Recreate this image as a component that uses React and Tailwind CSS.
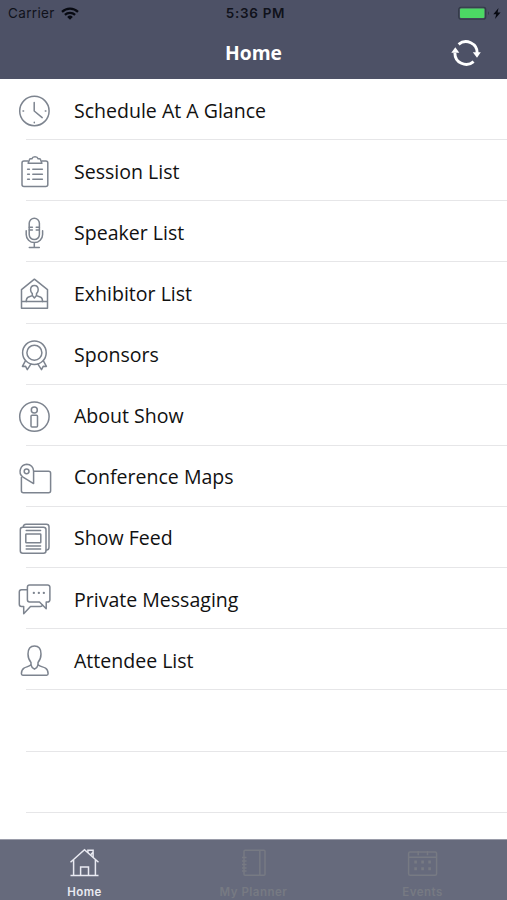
function Icon({ children }) {
  return (
    <svg
      viewBox="0 0 36 36"
      className="w-9 h-9 shrink-0"
      fill="none"
      stroke="#7d848f"
      strokeWidth="1.5"
      strokeLinecap="round"
      strokeLinejoin="round"
    >
      {children}
    </svg>
  );
}

const menuItems = [
  {
    label: 'Schedule At A Glance',
    icon: (
      <Icon>
        <circle cx="17.4" cy="18" r="14.7" />
        <path d="M17.2 9.5V18l8 6.6M6 18h.6M28.3 18h.6M17.3 29.3v.5" />
      </Icon>
    ),
  },
  {
    label: 'Session List',
    icon: (
      <Icon>
        <path d="M10.9 7H7a2 2 0 0 0-2 2v21.5a2 2 0 0 0 2 2h21.800a2 2 0 0 0 2-2V9a2 2 0 0 0-2-2h-3.700" />
        <path d="M11.100 9.300 12.500 5.600c.2-.6.600-.8 1.200-.8h1.200c.4-1.300 1.600-2 3.100-2s2.700.7 3.100 2h1.200c.6 0 1 .2 1.200.8l1.400 3.700z" />
        <path d="M10.600 15.300h1.800M15.800 15.300h9.600M10.600 20.300h1.800M15.800 20.300h9.600M10.600 25.300h1.800M15.800 25.300h9.600" />
      </Icon>
    ),
  },
  {
    label: 'Speaker List',
    icon: (
      <Icon>
        <rect x="12.2" y="3.2" width="10.2" height="21.4" rx="5.1" />
        <path d="M9.2 15.8v3.600a8.200 8.200 0 0 0 16.400 0v-3.600M17.300 27.600v4.800M12.300 32.400h10" />
        <path d="M12.200 12.200h3.200M19.200 12.200h3.200M12.200 15h3.200M19.200 15h3.200" />
      </Icon>
    ),
  },
  {
    label: 'Exhibitor List',
    icon: (
      <Icon>
        <path d="M4.5 32.200V13.600L17.400 3.200l13.100 10.400v18.600zM4.500 25.600h26" />
        <path d="M15.300 17.600c-1.200-1-1.700-2.300-1.700-3.800 0-2.600 1.500-4.400 3.800-4.400s3.800 1.800 3.800 4.400c0 1.500-.5 2.800-1.700 3.800v2l4.300 1.700c1.200.5 1.700 1.600 1.800 4.300M15.300 17.600v2L11 21.300c-1.200.5-1.700 1.600-1.800 4.300M15.300 19.600l2.100 2.400 2.100-2.400" />
      </Icon>
    ),
  },
  {
    label: 'Sponsors',
    icon: (
      <Icon>
        <circle cx="17.4" cy="14.7" r="11.8" />
        <circle cx="17.4" cy="14.7" r="7.5" />
        <path d="m8.400 22.800-3 5.600 3.200-.1 1.700 3.400 3.600-5.500M26.400 22.800l3 5.600-3.200-.1-1.700 3.400-3.600-5.500" />
      </Icon>
    ),
  },
  {
    label: 'About Show',
    icon: (
      <Icon>
        <circle cx="17.4" cy="17.6" r="14.7" />
        <circle cx="17.3" cy="11" r="3" />
        <rect x="14" y="16.2" width="6.5" height="11.8" rx="1" />
      </Icon>
    ),
  },
  {
    label: 'Conference Maps',
    icon: (
      <Icon>
        <path d="M4.400 17.500v13.300a2 2 0 0 0 2 2h25.200a2 2 0 0 0 2-2V13.200a2 2 0 0 0-2-2H16.800" />
        <path d="M16.600 23.600 5.600 16.800A7.100 7.100 0 0 1 9.700 4.300c4 0 6.900 3 6.900 6.900z" />
        <circle cx="9.6" cy="11.3" r="2.4" />
      </Icon>
    ),
  },
  {
    label: 'Show Feed',
    icon: (
      <Icon>
        <rect x="3.3" y="6.3" width="25.7" height="26" rx="2.5" />
        <path d="M6.300 6.100c0-1.800 1-2.900 2.800-2.900h20.300c1.600 0 2.600 1 2.600 2.600v20.500c0 1.800-1 2.800-2.800 2.900" />
        <rect x="8.8" y="13" width="15" height="8.8" rx="0.6" />
        <path d="M9.200 9.600h14.400M9.200 25h14.400M9.200 28h14.400" />
      </Icon>
    ),
  },
  {
    label: 'Private Messaging',
    icon: (
      <Icon>
        <path d="M12.600 3h18.100a2.200 2.200 0 0 1 2.200 2.200v12.600a2.200 2.200 0 0 1-2.200 2.200h-1.500v6.800L22.500 20h-9.900a2.200 2.200 0 0 1-2.200-2.200V5.200A2.200 2.200 0 0 1 12.600 3z" />
        <path d="M10.200 7.800H4.500a2.200 2.200 0 0 0-2.200 2.200v12.300a2.200 2.200 0 0 0 2.200 2.200h2.200v7.200l6.800-7.200h9.800c1.300 0 2-.6 2.300-1.400" />
        <path strokeWidth="2.2" d="M16.800 10.900h.1M21.800 10.900h.1M26.800 10.900h.1" />
      </Icon>
    ),
  },
  {
    label: 'Attendee List',
    icon: (
      <Icon>
        <path d="M14 19.400c-2-2.300-3-5.200-3-8.500 0-4.900 2.400-8 6.500-8s6.500 3.100 6.500 8c0 3.300-1 6.200-3 8.500v2.500c2.500 1.800 5.200 1.900 7.500 3.200 1.900 1.100 2.600 3 2.600 5.700 0 .9-.5 1.400-1.400 1.400H5.800c-.9 0-1.400-.5-1.400-1.400 0-2.700.7-4.600 2.600-5.700 2.300-1.300 4.600-1.400 7-3.200z" />
        <path d="M14 21.900c.3 1.900 1.700 3.300 3.500 4.300 1.800-1 3.200-2.400 3.500-4.300" />
      </Icon>
    ),
  },
];

function StatusBar() {
  return (
    <div className="grid grid-cols-3 items-center h-[27px] pl-2 pr-1 font-[Inter,sans-serif] text-[13.5px] text-[#10121b]">
      <div className="flex items-center gap-1.5 tracking-[0.35px]">
        <span>Carrier</span>
        <svg viewBox="0 0 18 13" className="w-[18px] h-[13px]" fill="none" stroke="#080a12" strokeWidth="2.2">
          <path d="M1 4.9a11.5 11.5 0 0 1 16 0M3.9 7.9a7.300 7.300 0 0 1 10.200 0" />
          <path d="M9 12.700 6.200 9.900a4 4 0 0 1 5.600 0z" fill="#080a12" stroke="none" />
        </svg>
      </div>
      <div className="text-center font-semibold tracking-[0.7px] whitespace-nowrap">5:36 PM</div>
      <div className="flex items-center justify-end">
        <svg viewBox="0 0 44 14" className="w-11 h-3.5 -translate-x-px -translate-y-[0.5px]">
          <rect x="0.7" y="0.7" width="27" height="12" rx="2.5" fill="none" stroke="#343b48" strokeWidth="1.3" />
          <rect x="2" y="2" width="24.4" height="9.4" rx="1" fill="#4cd964" />
          <path d="M30 4.800c1.300.5 1.300 3.200 0 3.700z" fill="#343b48" />
          <path d="M40.500 1.500 35.300 7.700h2.900L37 12.500l5.600-6.600h-3z" fill="#080a12" />
        </svg>
      </div>
    </div>
  );
}

function NavBar() {
  return (
    <div className="grid grid-cols-3 items-center h-[51px] px-[26px]">
      <h1 className="col-start-2 text-center text-[19.3px] leading-6 font-bold text-white">Home</h1>
      <button className="justify-self-end" aria-label="Refresh">
        <svg viewBox="0 0 30 28" className="w-[30px] h-7" fill="none" stroke="#fff" strokeWidth="2.9">
          <path d="M7.600 5.400A11.300 11.300 0 0 1 26.200 14.200M22.600 22.600A11.300 11.300 0 0 1 3.900 13.800" />
          <path d="M21.800 13.200h8L26 18.700zM.3 13.800h8L4.300 8.200z" fill="#fff" stroke="none" />
        </svg>
      </button>
    </div>
  );
}

const tabs = [
  {
    label: 'Home',
    active: true,
    icon: (
      <>
        <path d="M1.500 14.200 15.500 1.700l14 12.500M4.600 11.600v15.800M26.400 11.600v15.800M1.500 27.400h28M11.600 27.200v-8.300h7.900v8.300" />
        <path d="M18.900 4.700V2.200h5.200v7M21.500 6.900l2.500-2.600" />
      </>
    ),
  },
  {
    label: 'My Planner',
    icon: (
      <>
        <rect x="6" y="2.2" width="21" height="25" rx="1" />
        <path d="M21.800 2.200v25M4 9.500h4.500M4 13h4.500M4 16.500h4.500M4 20h4.500M4 23h4.500" />
      </>
    ),
  },
  {
    label: 'Events',
    icon: (
      <>
        <rect x="1.6" y="4" width="28" height="23.2" rx="1.5" />
        <path d="M1.600 9.200h28M11.200 3v4.200M20.500 3v4.200" />
        <path
          strokeWidth="3"
          d="M7.300 14h2.600M14.300 14h2.600M21.300 14h2.600M7.300 20.800h2.600M14.300 20.800h2.600M21.300 20.800h2.600"
        />
      </>
    ),
  },
];

function TabBar() {
  return (
    <nav className="grid grid-cols-3 h-[61px] bg-[#666a7c] border-t border-[#9a9ca9]">
      {tabs.map((tab) => (
        <div
          key={tab.label}
          className={
            tab.active
              ? 'flex flex-col items-center pt-2 text-[#e9eaf2]'
              : 'flex flex-col items-center pt-2 text-[#777a83]'
          }
        >
          <svg
            viewBox="0 0 31 30"
            className="w-[31px] h-[30px]"
            fill="none"
            stroke="currentColor"
            strokeWidth="1.5"
          >
            {tab.icon}
          </svg>
          <span className="mt-1.5 font-[Inter,sans-serif] text-[11.5px] leading-4 font-semibold tracking-[0.5px]">
            {tab.label}
          </span>
        </div>
      ))}
    </nav>
  );
}

export default function App() {
  return (
    <div className="flex flex-col w-full h-screen overflow-hidden bg-white font-['Open_Sans',sans-serif]">
      <header className="h-[79px] shrink-0 bg-[#4d5166]">
        <StatusBar />
        <NavBar />
      </header>

      <ul className="flex-1 min-h-0 overflow-hidden">
        {menuItems.map((item) => (
          <li key={item.label} className="flex h-[61.15px] pl-[17px]">
            <div className="pt-3.5">{item.icon}</div>
            <div className="flex-1 -ml-[27px] pl-12 pt-[17.5px] border-b border-[#e6e6e8] text-[19.55px] leading-7 text-[#111]">
              {item.label}
            </div>
          </li>
        ))}
        {/* empty rows */}
        <li className="h-[61.15px] ml-[26px] border-b border-[#e6e6e8]" />
        <li className="h-[61.15px] ml-[26px] border-b border-[#e6e6e8]" />
      </ul>

      <TabBar />
    </div>
  );
}
